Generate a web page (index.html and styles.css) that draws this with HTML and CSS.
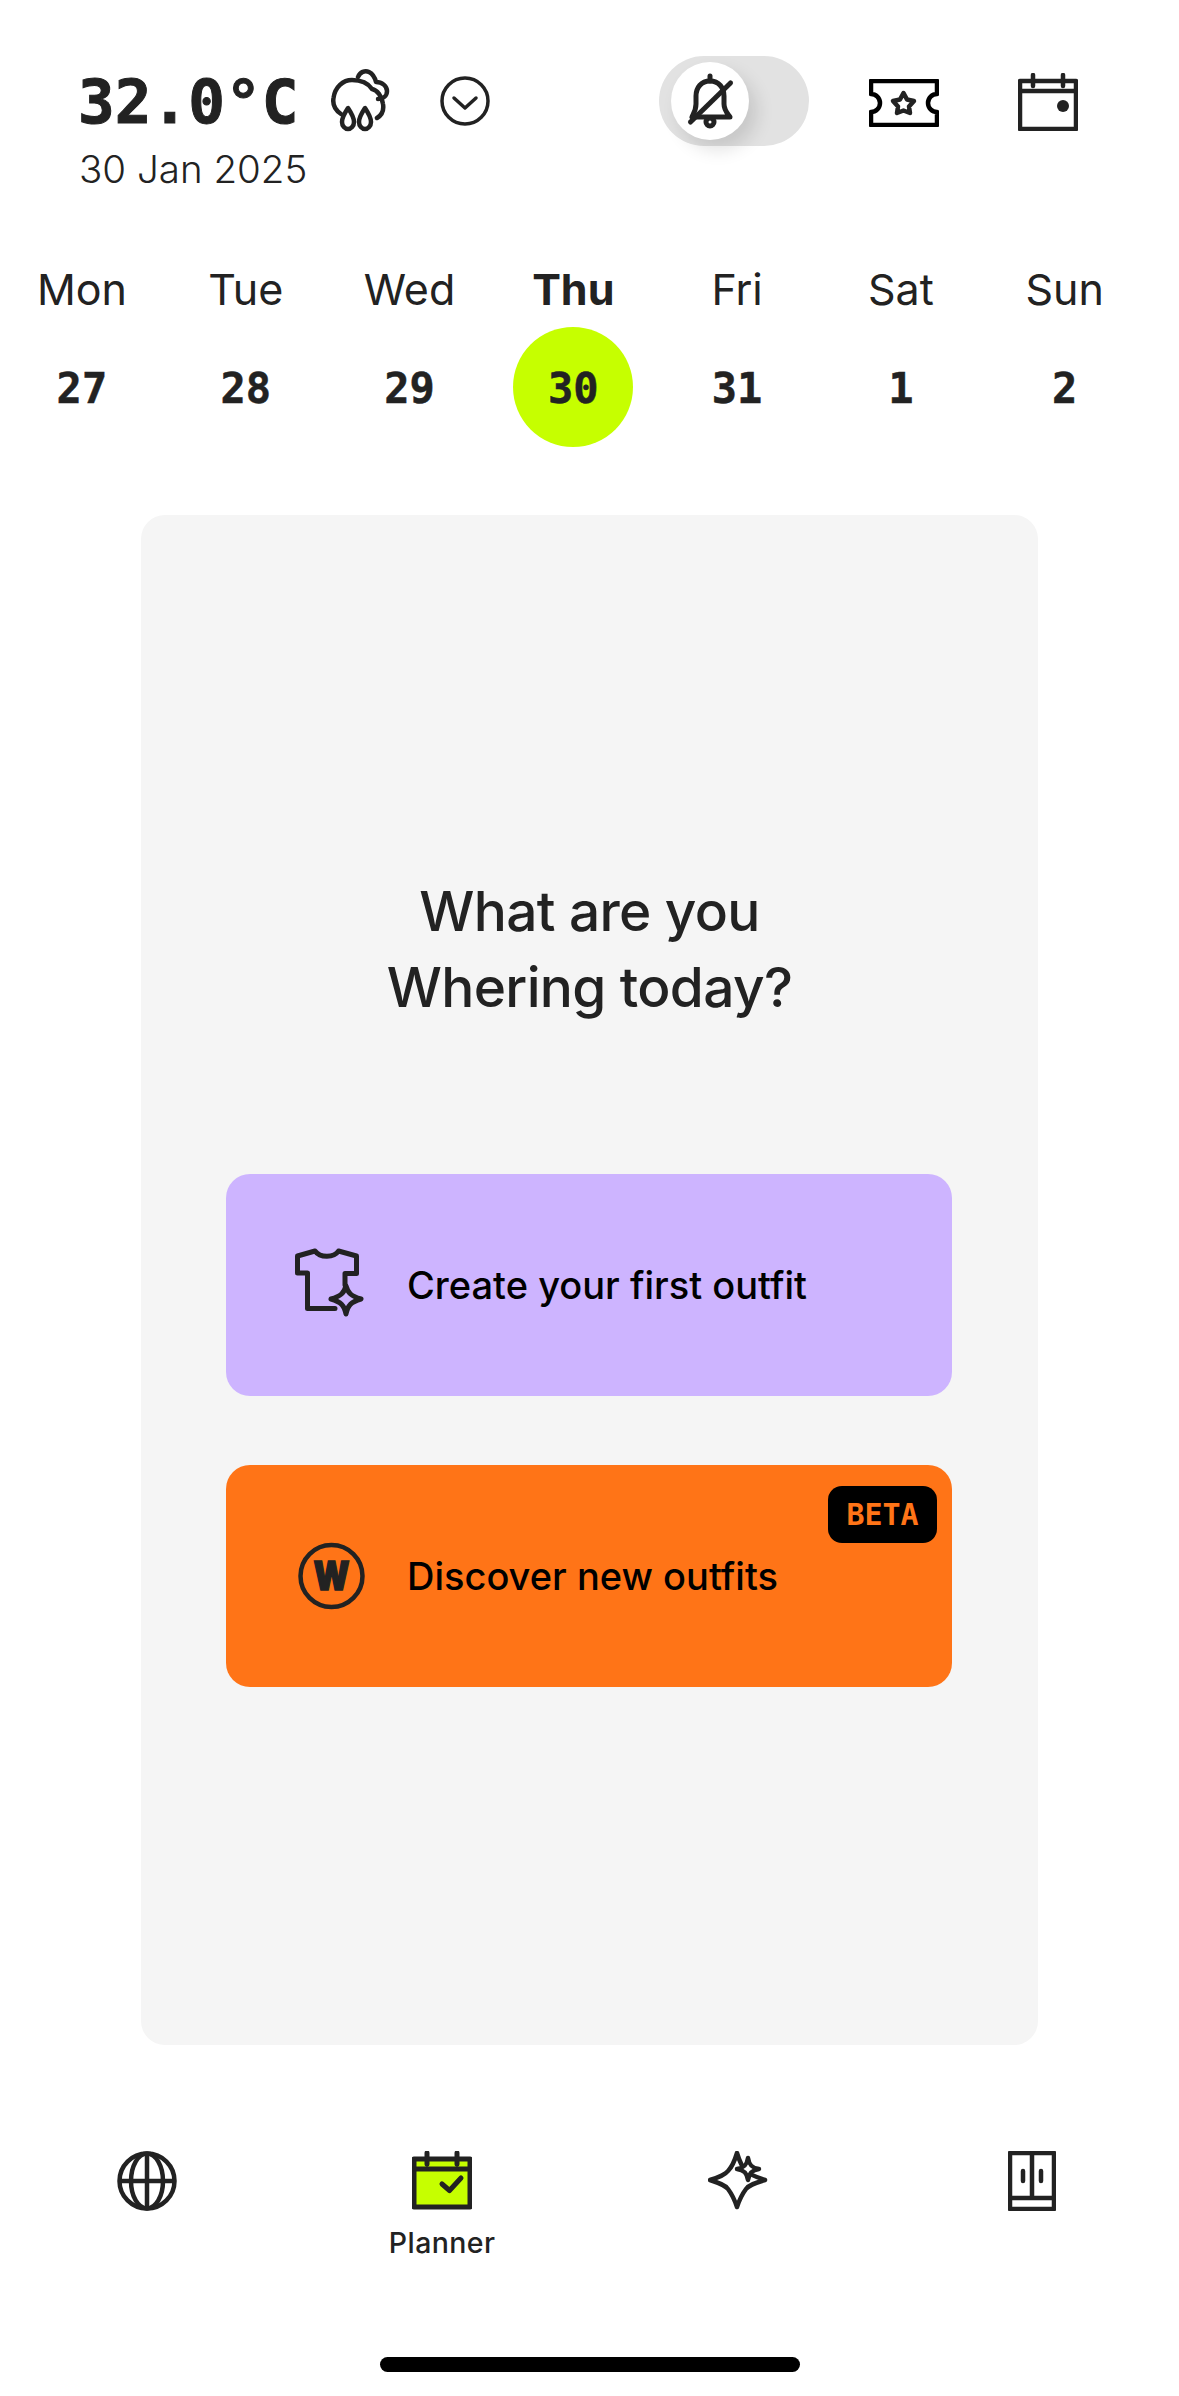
FILE: index.html
```html
<!DOCTYPE html>
<html lang="en">
<head>
    <meta charset="UTF-8">
    <title>Planner</title>
    <link rel="stylesheet" href="styles.css">
</head>
<body>
    <div class="top">
        <div class="weather">
            <div class="temp-row">
                <span class="temp">32.0°C</span>
                <svg class="icon-cloud" viewBox="0 0 60 64" width="60" height="64" fill="none" stroke="#222" stroke-width="4.500" stroke-linecap="round" stroke-linejoin="round">
                    <path d="M11 46C5 42 2.500 36 3.500 30C5 19 13 12 22 12C31 12 38 15 42 21C47 22 52 28 53 36C54 42 52 47 47 50"/>
                    <path d="M28 9C30 4 35 2 39 4C43 6 45 10 46 14C52 14 57 18 57 23C57 28 53 31 48 31"/>
                    <path d="M18 40C14 46 12 50 12 54C12 58 15 61 18 61C21 61 24 58 24 54C24 50 22 46 18 40Z"/>
                    <path d="M35 40C31 46 29 50 29 54C29 58 32 61 35 61C38 61 41 58 41 54C41 50 39 46 35 40Z"/>
                </svg>
                <svg class="icon-chevron" viewBox="0 0 50 50" width="50" height="50" fill="none" stroke="#222" stroke-width="3.500" stroke-linecap="round" stroke-linejoin="round">
                    <circle cx="25" cy="25" r="23"/>
                    <path d="M14 22L25 32L36 22"/>
                </svg>
            </div>
            <div class="date">30 Jan 2025</div>
        </div>
        <div class="actions">
            <div class="toggle">
                <div class="knob">
                    <svg viewBox="0 0 78 78" width="78" height="78" fill="none" stroke="#222" stroke-width="5" stroke-linecap="round" stroke-linejoin="round">
                        <path d="M39 14V19"/>
                        <path d="M39 19C30 19 25 26 25 34V42C25 48 23 51 21 55H59C56 51 53 48 53 42V34C53 26 48 19 39 19Z"/>
                        <circle cx="39" cy="60" r="4"/>
                        <path d="M19.500 60L59.500 21"/>
                    </svg>
                </div>
            </div>
            <svg class="icon-ticket" viewBox="0 0 70 48" width="70" height="48" fill="none" stroke-linejoin="round">
                <path d="M2 2H68V15A9 9 0 0 0 68 33V46H2V33A9 9 0 0 0 2 15Z" stroke="#000" stroke-width="4.500"/>
                <path d="M34.500 14L38 20.500L45 22L40 27.500L41 34L34.500 31.500L28 34L29 27.500L24 22L31 20.500Z" stroke="#222" stroke-width="4.500"/>
            </svg>
            <svg class="icon-calendar" viewBox="0 0 60 58" width="60" height="58" fill="none" stroke="#222" stroke-width="4.500" stroke-linecap="round" stroke-linejoin="round">
                <rect x="2" y="8" width="56" height="48"/>
                <path d="M2 18H58M15 2V13M45 2V13"/>
                <circle cx="45" cy="33" r="6" fill="#222" stroke="none"/>
            </svg>
        </div>
    </div>

    <div class="week">
        <div class="day"><span class="day-name">Mon</span><span class="day-num">27</span></div>
        <div class="day"><span class="day-name">Tue</span><span class="day-num">28</span></div>
        <div class="day"><span class="day-name">Wed</span><span class="day-num">29</span></div>
        <div class="day today"><span class="day-name">Thu</span><span class="day-num">30</span></div>
        <div class="day"><span class="day-name">Fri</span><span class="day-num">31</span></div>
        <div class="day"><span class="day-name">Sat</span><span class="day-num">1</span></div>
        <div class="day"><span class="day-name">Sun</span><span class="day-num">2</span></div>
    </div>

    <div class="card">
        <h1 class="card-title">What are you<br>Whering today?</h1>
        <div class="btn btn-purple">
            <svg viewBox="0 0 76 76" width="76" height="76" fill="none" stroke="#222" stroke-width="5" stroke-linecap="round" stroke-linejoin="round">
                <path d="M53 38V26.500H64.500V9L46.500 4C42 11 28 11 23 4L5.500 9V26H15.500V61.500H43"/>
                <path d="M54 39C56 46 59 49 69 52C59 55 56 58 54 67C52 58 49 55 39 52C49 49 52 46 54 39Z"/>
            </svg>
            <span>Create your first outfit</span>
        </div>
        <div class="btn btn-orange">
            <svg viewBox="0 0 76 76" width="76" height="76" fill="none">
                <circle cx="39.500" cy="38" r="31" stroke="#222" stroke-width="4.500"/>
                <text class="logo-w" x="39.500" y="52" text-anchor="middle" textLength="36" lengthAdjust="spacingAndGlyphs">W</text>
            </svg>
            <span>Discover new outfits</span>
            <span class="beta">BETA</span>
        </div>
    </div>

    <div class="nav">
        <div class="nav-item">
            <svg viewBox="0 0 60 60" width="60" height="60" fill="none" stroke="#222" stroke-width="4.500">
                <circle cx="30" cy="30" r="27.500"/>
                <ellipse cx="30" cy="30" rx="16" ry="27.500"/>
                <path d="M30 2V58M2 30H58"/>
            </svg>
        </div>
        <div class="nav-item">
            <svg viewBox="0 0 60 60" width="60" height="60" fill="#c6ff00" stroke="#222" stroke-width="5" stroke-linecap="round" stroke-linejoin="round">
                <rect x="2" y="8" width="56" height="48"/>
                <path d="M2 18H58M15 2V13M45 2V13"/>
                <path d="M30 33L37.500 39.500L49 27" fill="none"/>
            </svg>
            <span class="nav-label">Planner</span>
        </div>
        <div class="nav-item">
            <svg class="icon-sparkle" viewBox="0 0 60 60" width="60" height="60" fill="none" stroke="#222" stroke-width="4.500" stroke-linejoin="round">
                <path d="M29 2C32 12 35 17 38 20C42 24 48 26 57 29C47 32 41 34 38 38C35 42 32 47 29 56C26 47 23 42 20 38C17 34 11 32 2 29C11 26 17 24 20 20C23 17 26 12 29 2Z"/>
                <path d="M40 7C41 14 44 17 51 18C44 19 41 22 40 29C39 22 36 19 29 18C36 17 39 14 40 7Z" fill="#fff"/>
            </svg>
        </div>
        <div class="nav-item">
            <svg viewBox="0 0 48 60" width="48" height="60" fill="none" stroke="#222" stroke-width="4.500" stroke-linecap="round" stroke-linejoin="round">
                <rect x="2" y="2" width="44" height="56"/>
                <path d="M2 47H46M24 2V47M15 20V30M33 20V30"/>
            </svg>
        </div>
    </div>
    <div class="home-bar"></div>
</body>
</html>
```

FILE: styles.css
```css
body{
    margin:0;
    width:1179px;
    height:2396px;
    background-color:#fff;
    color:#222;
    font-family:'Inter','Noto Sans',sans-serif;
    overflow:hidden;
}

/* header */
.top{
    display:flex;
    justify-content:space-between;
    height:252px;
    box-sizing:border-box;
    padding:56px 101px 0 78px;
}

.temp-row{
    display:flex;
    align-items:center;
    height:90px;
}

.temp{
    font-family:'DejaVu Sans Mono','Liberation Mono',monospace;
    font-weight:700;
    font-size:61px;
    width:252px;
    -webkit-text-stroke:1px #222;
}

.icon-cloud{
    margin-top:-2px;
}

.icon-chevron{
    margin-left:50px;
}

.date{
    font-size:38.5px;
    font-weight:300;
    line-height:50px;
    margin-top:-2px;
    padding-left:1px;
}

.actions{
    display:flex;
    align-items:flex-start;
}

.toggle{
    width:150px;
    height:90px;
    box-sizing:border-box;
    padding:6px 12px;
    border-radius:45px;
    background-color:#e2e2e2;
}

.knob{
    width:78px;
    height:78px;
    border-radius:50%;
    background-color:#fff;
    box-shadow:8px 10px 18px rgba(0,0,0,.12);
}

.icon-ticket{
    margin:23px 0 0 60px;
}

.icon-calendar{
    margin:17px 0 0 79px;
}

/* week strip */
.week{
    display:grid;
    grid-template-columns:repeat(7,163.8px);
    height:263px;
}

.day{
    display:flex;
    flex-direction:column;
    align-items:center;
}

.day-name{
    font-size:43px;
    line-height:75px;
}

.day-num{
    width:120px;
    height:120px;
    border-radius:50%;
    text-align:center;
    line-height:123px;
    font-family:'DejaVu Sans Mono','Liberation Mono',monospace;
    font-weight:700;
    font-size:42px;
    -webkit-text-stroke:.5px #222;
}

.today .day-name{
    font-weight:700;
}

.today .day-num{
    background-color:#c6ff00;
}

/* main card */
.card{
    width:897px;
    height:1530px;
    box-sizing:border-box;
    margin-left:141px;
    padding-top:358px;
    border-radius:24px;
    background-color:#f5f5f5;
}

.card-title{
    margin:0 0 149px;
    text-align:center;
    font-size:55px;
    font-weight:500;
    line-height:76px;
    letter-spacing:-.65px;
}

.btn{
    position:relative;
    display:flex;
    align-items:center;
    gap:39px;
    width:726px;
    height:222px;
    box-sizing:border-box;
    margin:0 0 69px 85px;
    padding-left:66px;
    border-radius:24px;
    color:#000;
    font-size:38px;
    font-weight:500;
}

.btn-purple{
    background-color:#cdb4ff;
}

.btn-orange{
    background-color:#ff7417;
}

.logo-w{
    font-family:'Inter',sans-serif;
    font-weight:900;
    font-size:40px;
    fill:#222;
    stroke:#222;
    stroke-width:1.5px;
}

.beta{
    position:absolute;
    top:21px;
    right:15px;
    width:109px;
    height:57px;
    border-radius:14px;
    background-color:#000;
    color:#ff7417;
    text-align:center;
    line-height:57px;
    font-family:'DejaVu Sans Mono','Liberation Mono',monospace;
    font-weight:700;
    font-size:30px;
}

/* bottom nav */
.nav{
    display:grid;
    grid-template-columns:repeat(4,1fr);
    height:312px;
    box-sizing:border-box;
    padding-top:106px;
}

.nav-item{
    display:flex;
    flex-direction:column;
    align-items:center;
}

.icon-sparkle{
    margin-left:3px;
}

.nav-label{
    margin-top:14px;
    font-size:28.5px;
    font-weight:500;
    line-height:36px;
    letter-spacing:.4px;
}

.home-bar{
    width:420px;
    height:15px;
    margin-left:380px;
    border-radius:8px;
    background-color:#000;
}
```
